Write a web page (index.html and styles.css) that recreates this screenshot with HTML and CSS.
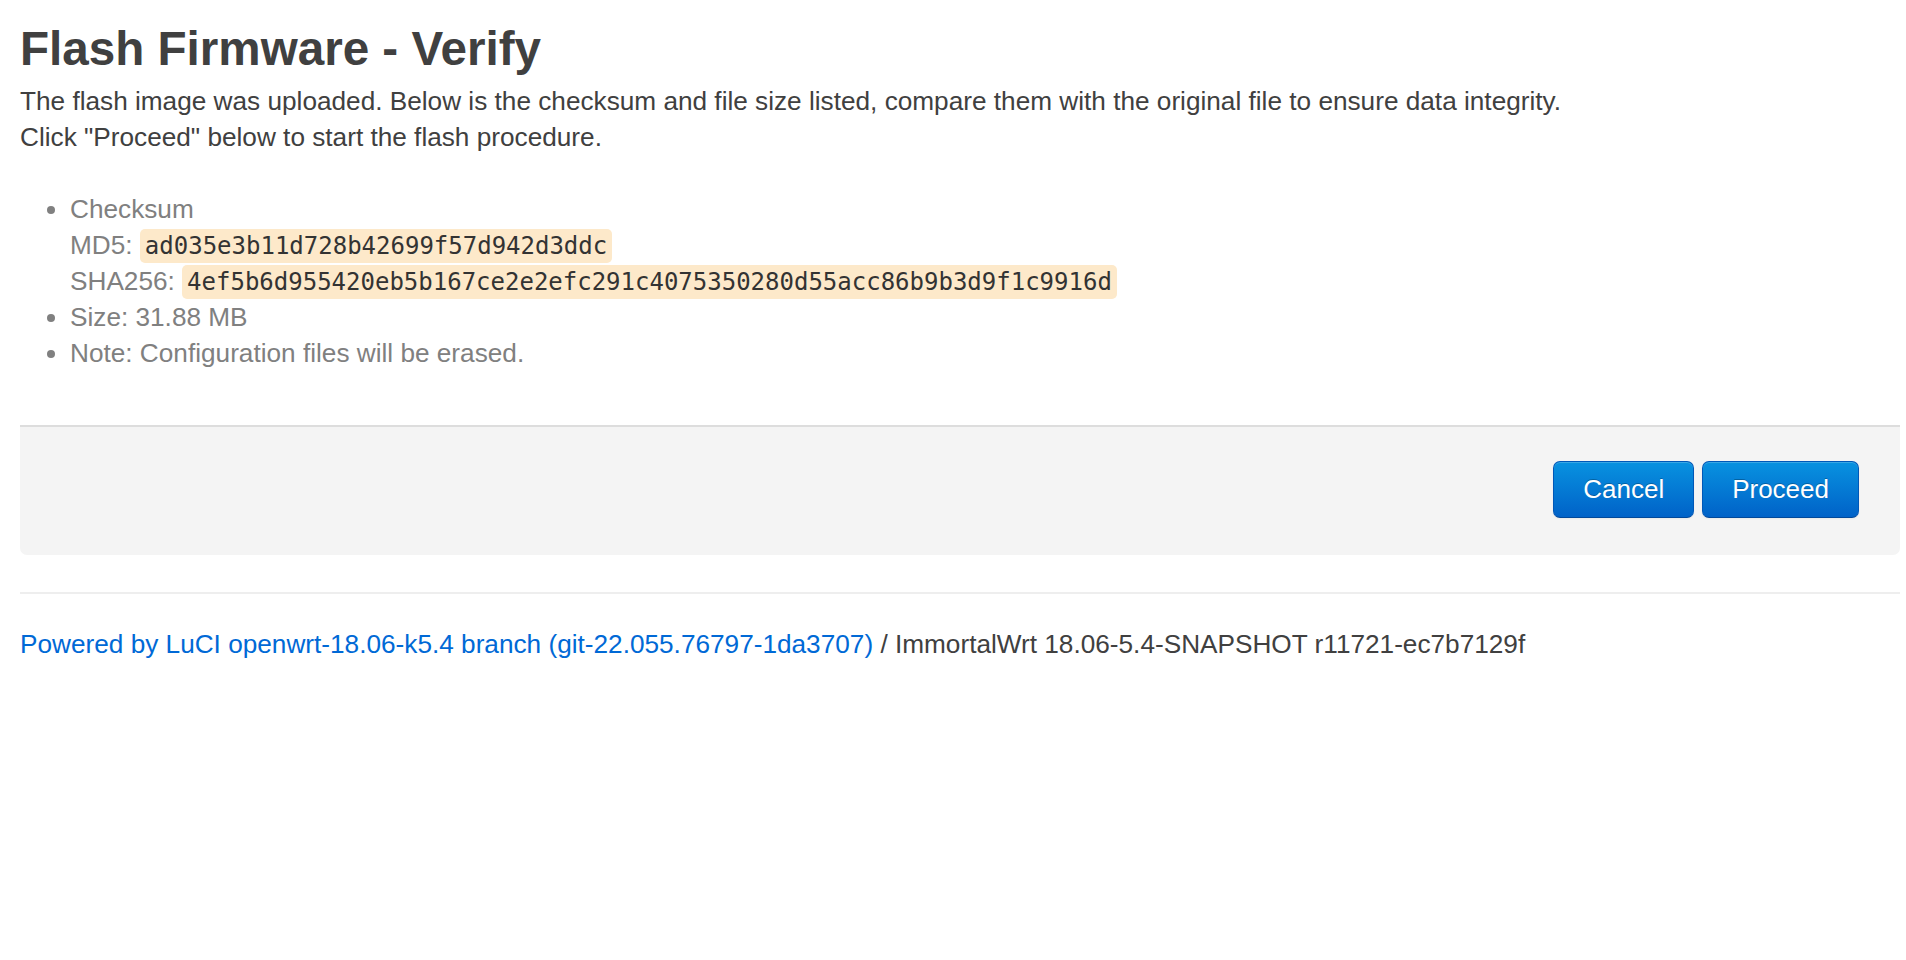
FILE: index.html
```html
<!DOCTYPE html>
<html>
<head>
<meta charset="utf-8">
<title>Flash Firmware - Verify</title>
<link rel="stylesheet" href="styles.css">
</head>
<body>
<div class="container">
  <h2 class="title">Flash Firmware - Verify</h2>
  <p class="desc">The flash image was uploaded. Below is the checksum and file size listed, compare them with the original file to ensure data integrity.<br>Click "Proceed" below to start the flash procedure.</p>
  <ul class="info">
    <li>Checksum<br>MD5: <code class="hash">ad035e3b11d728b42699f57d942d3ddc</code><br>SHA256: <code class="hash">4ef5b6d955420eb5b167ce2e2efc291c4075350280d55acc86b9b3d9f1c9916d</code></li>
    <li>Size: 31.88 MB</li>
    <li>Note: Configuration files will be erased.</li>
  </ul>
  <div class="actions">
    <button class="btn">Cancel</button>
    <button class="btn">Proceed</button>
  </div>
  <footer class="footer">
    <a class="footer-link" href="#">Powered by LuCI openwrt-18.06-k5.4 branch (git-22.055.76797-1da3707)</a> / ImmortalWrt 18.06-5.4-SNAPSHOT r11721-ec7b7129f
  </footer>
</div>
</body>
</html>
```

FILE: styles.css
```css
html, body {
  margin: 0;
  padding: 0;
  background: #ffffff;
}

body {
  font-family: "Liberation Sans", Helvetica, Arial, sans-serif;
  font-size: 26.2px;
  line-height: 35px;
  color: #404040;
}

.container {
  padding: 0 6px 0 20px;
}

.title {
  margin: 23px 0 0;
  font-size: 47.6px;
  line-height: 52px;
  font-weight: bold;
  color: #404040;
}

.desc {
  margin: 9px 0 0;
  line-height: 35.5px;
}

.info {
  margin: 36px 0 54px;
  padding-left: 50px;
  line-height: 36px;
  color: #808080;
}

.hash {
  font-family: "DejaVu Sans Mono", Menlo, monospace;
  font-size: 24px;
  line-height: 20px;
  color: #333333;
  background: #fde9ca;
  padding: 3px 5px;
  border-radius: 5px;
}

.actions {
  display: flex;
  justify-content: flex-end;
  gap: 8px;
  background: #f4f4f4;
  border-top: 2px solid #dddddd;
  border-radius: 0 0 7px 7px;
  padding: 34px 41px 37px;
}

.btn {
  font-family: "Liberation Sans", Helvetica, Arial, sans-serif;
  font-size: 26px;
  line-height: 35px;
  color: #ffffff;
  padding: 10px 29px;
  border: 1px solid #0058b8;
  border-bottom-color: #00489a;
  border-radius: 7px;
  background: linear-gradient(#0892e0, #0062c8);
  text-shadow: 0 -1px 0 rgba(0, 0, 0, 0.25);
  box-shadow: inset 0 1px 0 rgba(255, 255, 255, 0.2), 0 1px 2px rgba(0, 0, 0, 0.05);
  cursor: pointer;
}

.footer {
  margin-top: 37px;
  border-top: 2px solid #eeeeee;
  padding-top: 33px;
  color: #404040;
}

.footer-link {
  color: #0069d6;
  text-decoration: none;
}
```
